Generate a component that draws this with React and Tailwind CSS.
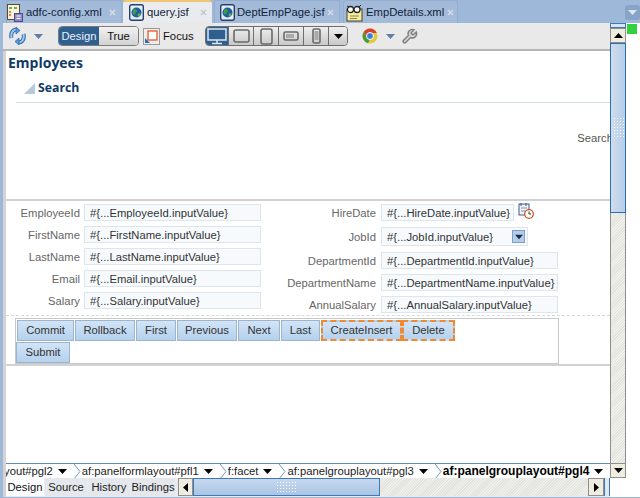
import React from "react";

const Close = ({ c = "#d5deea" }) => (
  <svg width="7" height="7" viewBox="0 0 7 7" className="shrink-0 ml-auto">
    <path d="M1 1L6 6M6 1L1 6" stroke={c} strokeWidth="1.5" />
  </svg>
);

const Globe = () => (
  <svg width="15" height="17" viewBox="0 0 15 17" className="shrink-0">
    <rect x="0.7" y="0.7" width="13.6" height="15.6" rx="2" fill="#e8eef7" stroke="#24406f" strokeWidth="1.4" />
    <circle cx="7.5" cy="8.5" r="5" fill="#1f5f9e" />
    <path d="M4 6c2-1.800 3.500-1 4 .5s-1.500 1.500-1.500 3-2 1.500-3-.5z" fill="#3f9a4a" />
    <path d="M9 9.500c1.500-.5 2.500 0 2.500 1s-1 2-2 2-1-2-.5-3z" fill="#69a84f" />
  </svg>
);

const ConfigIcon = () => (
  <svg width="16" height="18" viewBox="0 0 16 18" className="shrink-0">
    <rect x="0.500" y="0.500" width="12" height="15" fill="#fbf3d8" stroke="#5a4a36" />
    <path d="M2 4h3M7 4h3" stroke="#2f9a4a" strokeWidth="1.500" />
    <path d="M2 8h2M2 11h2" stroke="#d2632a" strokeWidth="1.500" />
    <rect x="7.500" y="9.500" width="8" height="8" fill="#8f8cc9" stroke="#4d4a8c" />
    <path d="M9.500 12h4M9.500 14.500h4" stroke="#fff" />
  </svg>
);

const XmlIcon = () => (
  <svg width="17" height="18" viewBox="0 0 17 18" className="shrink-0">
    <rect x="1" y="5" width="15" height="12" fill="#f6eda0" stroke="#4a4326" />
    <circle cx="4.500" cy="5.500" r="3" fill="#fff" stroke="#222" strokeWidth="1.300" />
    <circle cx="11" cy="5.500" r="3" fill="#fff" stroke="#222" strokeWidth="1.300" />
    <path d="M1 2l2 1M13 3l2-2" stroke="#222" />
    <path d="M4 12h9M4 14.500h7" stroke="#8b8350" />
  </svg>
);

const SmallCaret = ({ c = "#5f7fa8" }) => (
  <svg width="9" height="5" viewBox="0 0 9 5" className="shrink-0">
    <path d="M0 0h9L4.500 5z" fill={c} />
  </svg>
);

const Caret = ({ dir = "down", size = 9, c = "#000" }) => {
  const d = { down: "M0 2h9L4.500 7z", up: "M0 7h9L4.500 2z", left: "M7 0v9L2 4.500z", right: "M2 0v9l5-4.500z" }[dir];
  return (
    <svg width={size} height={size} viewBox="0 0 9 9" className="shrink-0">
      <path d={d} fill={c} />
    </svg>
  );
};

const Tab = ({ w, icon, label, active, pl, gap, closeColor }) => (
  <div
    className={`flex items-center ${gap} ${pl} pr-[5px] ${w} h-[23px] shrink-0 rounded-t-[3px] ${
      active
        ? "bg-[#e9ebee] border-t-2 border-[#f2c572]"
        : "bg-[#a3bbd8] border border-b-0 border-[#93aed0] pt-[1px]"
    }`}
  >
    {icon}
    <span className="text-[11.25px] text-[#10233c] whitespace-nowrap">{label}</span>
    <Close c={closeColor} />
  </div>
);

const Device = ({ children, active, w }) => (
  <div
    className={`${w} h-full flex items-center justify-center border-r border-[#6e6e6e] last:border-r-0 ${
      active ? "bg-[#2e5f8f]" : "bg-gradient-to-b from-[#efefef] to-[#c9c9c9]"
    }`}
  >
    {children}
  </div>
);

const Field = ({ label, value, w, labelW, h = "h-[17px]", ml = "ml-[4px]", children }) => (
  <div className={`flex items-center ${h}`}>
    <div className={`${labelW} pt-[1px] flex justify-end text-[11.25px] text-[#666] whitespace-nowrap shrink-0`}>{label}</div>
    <div className={`${w} ${h} ${ml} shrink-0 bg-[#f6fafd] border border-[#dde6ec] flex items-center pl-[5px] text-[11.25px] text-[#333] whitespace-nowrap overflow-hidden`}>
      <span className="flex-1 pt-[1px]">{value}</span>
      {children}
    </div>
  </div>
);

const Btn = ({ w, label, dashed, extra = "" }) => (
  <div
    className={`${w} ${extra} h-[21px] shrink-0 flex items-center justify-center text-[11.25px] text-[#333] bg-gradient-to-b from-[#d2e4f6] to-[#b4d1ee] ${
      dashed ? "border-2 border-dashed border-[#f08a32]" : "border border-[#9cb4cd]"
    }`}
  >
    {label}
  </div>
);

const Crumb = ({ label, bold }) => (
  <div className="flex items-center gap-[5px] shrink-0">
    <span className={`whitespace-nowrap ${bold ? "font-bold text-black text-[12px]" : "text-[#222]"}`}>{label}</span>
    <Caret />
    <svg width="8" height="15" viewBox="0 0 8 15" className="shrink-0 ml-[1px]">
      <path d="M1 0l6 7.500L1 15" fill="none" stroke="#6f97c3" />
    </svg>
  </div>
);

const BottomTab = ({ label, active, w }) => (
  <div
    className={`${w} h-[18px] flex items-center justify-center text-[11.25px] shrink-0 ${
      active ? "bg-white text-[#111]" : "bg-[#e4e8ec] text-[#222]"
    }`}
  >
    {label}
  </div>
);

const ArrowBox = ({ dir, className = "" }) => (
  <div className={`flex items-center justify-center bg-[#efece0] border border-[#8f8f8f] ${className}`}>
    <Caret dir={dir} />
  </div>
);

export default function App() {
  return (
    <div className="w-[640px] h-[498px] overflow-hidden flex flex-col bg-[#9db8d8] font-['Liberation_Sans',Arial,sans-serif]">
      <div className="h-[23px] flex items-end shrink-0 pl-[6px] relative">
        <Tab w="w-[116px]" pl="pl-0" gap="gap-[3px]" icon={<ConfigIcon />} label="adfc-config.xml" />
        <div className="w-[1px]" />
        <Tab w="w-[89px]" pl="pl-[6px]" gap="gap-[3px]" icon={<Globe />} label="query.jsf" active closeColor="#c3c8cf" />
        <div className="w-[2px]" />
        <Tab w="w-[126px]" pl="pl-[5px]" gap="gap-[2px]" icon={<Globe />} label="DeptEmpPage.jsf" />
        <div className="w-[3px]" />
        <Tab w="w-[115px]" pl="pl-[2px]" gap="gap-[3px]" icon={<XmlIcon />} label="EmpDetails.xml" />
        <div className="absolute left-[625px] top-[5px] w-[15px] h-[15px] rounded-[3px] bg-[#88a4c6] flex items-center justify-center">
          <SmallCaret c="#dfe8f2" />
        </div>
      </div>

      <div className="flex flex-1 min-h-0">
        <div className="flex-1 flex flex-col min-w-0">
          <div className="h-[28px] shrink-0 flex items-center pl-[6px] bg-[#e9e9e9] border-b-2 border-[#b5b5b5] ml-[3px]">
            <svg width="17" height="18" viewBox="0 0 17 18" className="shrink-0">
              <path d="M7 2.500C3 3 1.500 7 2.500 11" fill="none" stroke="#2a6cb0" strokeWidth="4" />
              <path d="M7 2.500C3 3 1.500 7 2.500 11" fill="none" stroke="#a5c8ee" strokeWidth="2" />
              <path d="M10 15.500c4-.5 5.500-4.500 4.500-8.500" fill="none" stroke="#2a6cb0" strokeWidth="4" />
              <path d="M10 15.500c4-.5 5.500-4.500 4.500-8.500" fill="none" stroke="#a5c8ee" strokeWidth="2" />
              <path d="M7 0l4 3.500L7 7z" fill="#5d97d6" stroke="#2a6cb0" strokeWidth="0.800" />
              <path d="M10 18l-4-3.500L10 11z" fill="#5d97d6" stroke="#2a6cb0" strokeWidth="0.800" />
            </svg>
            <div className="ml-[8px]"><SmallCaret /></div>
            <div className="ml-[15px] h-[20px] w-[81px] flex rounded-[4px] border border-[#7b7b7b] overflow-hidden text-[11.25px] shrink-0">
              <div className="w-[40px] bg-[#2e5f8f] text-[#e8f0f8] flex items-center justify-center">Design</div>
              <div className="flex-1 bg-gradient-to-b from-[#f2f2f2] to-[#d2d2d2] text-[#111] flex items-center justify-center">True</div>
            </div>
            <svg width="17" height="17" viewBox="0 0 17 17" className="ml-[4px] shrink-0">
              <rect x="0.500" y="0.500" width="16" height="16" fill="#eee" stroke="#9a9a9a" />
              <rect x="5" y="3" width="9" height="9" fill="#fff" stroke="#e8552a" strokeWidth="1.300" />
              <path d="M2 15l0-5 5 5z" fill="#2a6cb0" />
            </svg>
            <span className="ml-[3px] w-[28px] text-[11.25px] text-[#111]">Focus</span>
            <div className="ml-[14px] h-[20px] flex rounded-[4px] border border-[#6e6e6e] overflow-hidden shrink-0">
              <Device w="w-[23px]" active>
                <svg width="20" height="17" viewBox="0 0 20 17"><rect x="1" y="1" width="18" height="11" fill="none" stroke="#dce8f3" strokeWidth="1.500" /><path d="M10 12v3M5 15.500h10" stroke="#dce8f3" strokeWidth="1.500" /></svg>
              </Device>
              <Device w="w-[25px]">
                <svg width="17" height="14" viewBox="0 0 17 14"><rect x="1" y="1" width="15" height="12" rx="2" fill="none" stroke="#6a6a6a" strokeWidth="1.600" /></svg>
              </Device>
              <Device w="w-[25px]">
                <svg width="13" height="17" viewBox="0 0 13 17"><rect x="1" y="1" width="11" height="15" rx="2" fill="none" stroke="#6a6a6a" strokeWidth="1.600" /></svg>
              </Device>
              <Device w="w-[25px]">
                <svg width="16" height="10" viewBox="0 0 16 10"><rect x="1" y="1" width="14" height="8" rx="1.500" fill="none" stroke="#6a6a6a" strokeWidth="1.600" /><rect x="3" y="3" width="8" height="4" fill="#aaa" /></svg>
              </Device>
              <Device w="w-[25px]">
                <svg width="9" height="16" viewBox="0 0 9 16"><rect x="1" y="1" width="7" height="14" rx="1.500" fill="none" stroke="#6a6a6a" strokeWidth="1.600" /><rect x="2.500" y="3" width="4" height="9" fill="#aaa" /></svg>
              </Device>
              <Device w="w-[18px]"><Caret /></Device>
            </div>
            <svg width="16" height="16" viewBox="0 0 16 16" className="ml-[14px] shrink-0">
              <circle cx="8" cy="8" r="7.500" fill="#e4c93a" />
              <path d="M8 .5A7.500 7.500 0 0 1 14.800 5H8z" fill="#d8412f" />
              <path d="M1.700 4A7.500 7.500 0 0 1 8 .5V5L5 9z" fill="#d8412f" />
              <path d="M1.700 4A7.500 7.500 0 0 0 6 15.200L8 11 5 9z" fill="#4a9a3e" />
              <circle cx="8" cy="8" r="3.500" fill="#3d7fd6" stroke="#fff" />
            </svg>
            <div className="ml-[8px]"><SmallCaret /></div>
            <svg width="17" height="17" viewBox="0 0 24 24" className="ml-[6px] shrink-0">
              <path d="M14.700 6.300a1 1 0 0 0 0 1.400l1.600 1.600a1 1 0 0 0 1.400 0l3.770-3.770a6 6 0 0 1-7.940 7.940l-6.910 6.910a2.120 2.120 0 0 1-3-3l6.910-6.910a6 6 0 0 1 7.940-7.940z" fill="#d5d5d5" stroke="#7d7d7d" strokeWidth="2" />
            </svg>
          </div>

          <div className="flex flex-1 min-h-0">
            <div className="w-[6px] shrink-0 flex">
              <div className="w-[3px] bg-[#9db8d8]" />
              <div className="w-[3px] bg-[#d4d4d4]" />
            </div>
            <div className="flex-1 min-w-0 bg-white flex flex-col">
              <div className="h-[148px] shrink-0 flex flex-col overflow-hidden">
                <div className="pl-[2px] pt-[3px] h-[22px] text-[14px] font-bold text-[#0f3a66] leading-[18px] font-['Open_Sans',sans-serif]">Employees</div>
                <div className="ml-[10px] mt-[5px] h-[25px] shrink-0 border-b border-[#d3dee6] flex items-start pt-[1px]">
                  <svg width="11" height="11" viewBox="0 0 11 11" className="ml-[8px] mt-[4px] shrink-0">
                    <path d="M11 0v11H0z" fill="#b7c9dc" />
                  </svg>
                  <span className="ml-[3px] text-[12.25px] font-bold text-[#0f3a66] leading-[18px] font-['Open_Sans',sans-serif]">Search</span>
                </div>
                <div className="flex justify-end mt-[28px] -mr-[3px] text-[11.25px] text-[#555] leading-[14px]">
                  <span>Search</span>
                </div>
              </div>
              <div className="h-[2px] shrink-0 bg-[#d2d2d2]" />
              <div className="h-[115px] shrink-0 flex pt-[3px] border-b border-dashed border-[#d8d8d8]">
                <div className="w-[296px] shrink-0 flex flex-col gap-[5px]">
                  <Field labelW="w-[74px]" w="w-[177px]" label="EmployeeId" value="#{...EmployeeId.inputValue}" />
                  <Field labelW="w-[74px]" w="w-[177px]" label="FirstName" value="#{...FirstName.inputValue}" />
                  <Field labelW="w-[74px]" w="w-[177px]" label="LastName" value="#{...LastName.inputValue}" />
                  <Field labelW="w-[74px]" w="w-[177px]" label="Email" value="#{...Email.inputValue}" />
                  <Field labelW="w-[74px]" w="w-[177px]" label="Salary" value="#{...Salary.inputValue}" />
                </div>
                <div className="flex flex-col">
                  <div className="flex items-center gap-[4px]">
                    <Field labelW="w-[74px]" ml="ml-[5px]" w="w-[133px]" label="HireDate" value="#{...HireDate.inputValue}" />
                    <svg width="16" height="16" viewBox="0 0 16 16" className="shrink-0 -mt-[3px]">
                      <rect x="1" y="1" width="10" height="11" fill="#eef2fa" stroke="#3f5a90" />
                      <path d="M3 0v3M8 0v3" stroke="#3f5a90" />
                      <path d="M3 5h6M3 8h4" stroke="#7f93bb" />
                      <circle cx="11" cy="11" r="4.300" fill="#fff" stroke="#d0561f" strokeWidth="1.300" />
                      <path d="M11 8.500V11h2" stroke="#333" fill="none" />
                    </svg>
                  </div>
                  <div className="mt-[6px]">
                    <Field labelW="w-[74px]" ml="ml-[5px]" w="w-[147px]" h="h-[19px]" label="JobId" value="#{...JobId.inputValue}">
                      <div className="w-[13px] h-[13px] mr-[2px] bg-[#b4cdea] border border-[#7f9cc2] flex items-center justify-center">
                        <Caret size={8} c="#1d2c44" />
                      </div>
                    </Field>
                  </div>
                  <div className="mt-[6px] flex flex-col gap-[5px]">
                    <Field labelW="w-[74px]" ml="ml-[5px]" w="w-[177px]" label="DepartmentId" value="#{...DepartmentId.inputValue}" />
                    <Field labelW="w-[74px]" ml="ml-[5px]" w="w-[177px]" label="DepartmentName" value="#{...DepartmentName.inputValue}" />
                    <Field labelW="w-[74px]" ml="ml-[5px]" w="w-[177px]" label="AnnualSalary" value="#{...AnnualSalary.inputValue}" />
                  </div>
                </div>
              </div>
              <div className="ml-[9px] mt-[2px] w-[544px] h-[46px] shrink-0 border border-[#c9c9c9] pt-[1px]">
                <div className="flex pl-[1px] gap-[1px]">
                  <Btn w="w-[57px]" label="Commit" />
                  <Btn w="w-[60px]" label="Rollback" />
                  <Btn w="w-[40px]" label="First" />
                  <Btn w="w-[60px]" label="Previous" />
                  <Btn w="w-[42px]" label="Next" />
                  <Btn w="w-[39px]" label="Last" />
                  <Btn w="w-[81px]" label="CreateInsert" dashed />
                  <Btn w="w-[53px]" label="Delete" dashed extra="-ml-[1px]" />
                </div>
                <div className="mt-[1px]">
                  <Btn w="w-[54px]" label="Submit" />
                </div>
              </div>
              <div className="h-[2px] shrink-0 bg-[#d2d2d2]" />
              <div className="flex-1" />
              <div className="h-[15px] shrink-0 border-t border-[#5f8fc0] flex items-center text-[11.25px] overflow-hidden whitespace-nowrap">
                <div className="-ml-[2px] flex items-center gap-[1px] leading-[14px]">
                  <Crumb label="yout#pgl2" />
                  <Crumb label="af:panelformlayout#pfl1" />
                  <Crumb label="f:facet" />
                  <Crumb label="af:panelgrouplayout#pgl3" />
                  <Crumb label="af:panelgrouplayout#pgl4" bold />
                </div>
              </div>
            </div>
          </div>

          <div className="h-[19px] shrink-0 flex items-start bg-[#e9ebee]">
            <div className="w-[3px] h-full shrink-0 bg-[#9db8d8]" />
            <div className="w-[3px] h-full shrink-0 bg-[#d4d4d4]" />
            <div className="flex gap-[1px] shrink-0">
              <BottomTab w="w-[38px]" label="Design" active />
              <BottomTab w="w-[42px]" label="Source" />
              <BottomTab w="w-[42px]" label="History" />
              <BottomTab w="w-[44px]" label="Bindings" />
            </div>
            <div className="ml-[3px] flex-1 flex h-[18px] min-w-0">
              <ArrowBox dir="left" className="w-[15px] h-[18px] shrink-0" />
              <div className="w-[187px] shrink-0 flex items-center justify-center border border-[#3e78b5] bg-gradient-to-b from-[#c6d8ee] to-[#a9c4e4]">
                <div className="w-[22px] h-[12px] bg-[radial-gradient(#ffffff_40%,transparent_45%)] bg-[length:3px_3px]" />
              </div>
              <div className="flex-1 bg-[repeating-linear-gradient(135deg,#eeeeea_0,#eeeeea_1px,#e4e4de_1px,#e4e4de_2px)]" />
              <ArrowBox dir="right" className="w-[16px] h-[18px] shrink-0" />
              <div className="w-[6px] shrink-0 border-x border-[#3e78b5] bg-[#dfe7f0]" />
            </div>
          </div>
        </div>

        <div className="w-[16px] shrink-0 flex flex-col">
          <div className="h-[5px] shrink-0 border border-[#3e78b5] bg-[#dce6f2]" />
          <ArrowBox dir="up" className="h-[15px] shrink-0" />
          <div className="h-[170px] shrink-0 border border-[#2e6cb0] bg-gradient-to-r from-[#cfdef0] to-[#b6cde8] flex items-center justify-center">
            <div className="w-[11px] h-[22px] bg-[radial-gradient(#ffffff_40%,transparent_45%)] bg-[length:3px_3px]" />
          </div>
          <div className="flex-1 border-x border-[#8f8f8f] bg-[repeating-linear-gradient(135deg,#f0f0ec_0,#f0f0ec_1px,#e4e4de_1px,#e4e4de_2px)]" />
          <ArrowBox dir="down" className="h-[15px] shrink-0" />
          <div className="h-[19px] shrink-0 bg-white" />
        </div>

        <div className="w-[14px] shrink-0 bg-white pt-[1px] pl-[1px]">
          <div className="w-[10px] h-[10px] bg-[#33d13f]" />
        </div>
      </div>
      <div className="h-[1px] shrink-0 bg-[#9db8d8]" />
    </div>
  );
}
